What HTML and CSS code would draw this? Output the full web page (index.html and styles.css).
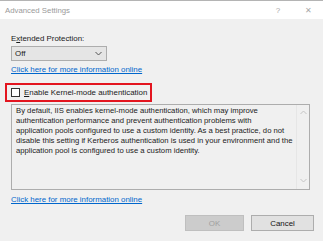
FILE: index.html
```html
<!DOCTYPE html>
<html lang="en">
<head>
    <meta charset="UTF-8">
    <title>Advanced Settings</title>
    <link rel="stylesheet" href="styles.css">
</head>
<body>
    <div class="titlebar">
        <span class="title">Advanced Settings</span>
        <span class="title-btn help">?</span>
        <span class="title-btn close">&#x2715;</span>
    </div>
    <div class="content">
        <div class="label">E<u>x</u>tended Protection:</div>
        <div class="select">
            <span>Off</span>
            <svg width="7" height="5" viewBox="0 0 7 5"><path d="M0.5 1 L3.5 4 L6.5 1" fill="none" stroke="#555" stroke-width="1"/></svg>
        </div>
        <a class="link" href="#">Click here for more information online</a>

        <div class="highlight">
            <span class="checkbox"></span>
            <span><u>E</u>nable Kernel-mode authentication</span>
        </div>

        <div class="description">
            <div class="desc-text">By default, IIS enables kernel-mode authentication, which may improve
authentication performance and prevent authentication problems with
application pools configured to use a custom identity. As a best practice, do not
disable this setting if Kerberos authentication is used in your environment and the
application pool is configured to use a custom identity.</div>
            <div class="scrollbar">
                <svg width="7" height="5" viewBox="0 0 7 5"><path d="M0.5 4 L3.5 1 L6.5 4" fill="none" stroke="#c4c4c4" stroke-width="1"/></svg>
                <svg width="7" height="5" viewBox="0 0 7 5"><path d="M0.5 1 L3.5 4 L6.5 1" fill="none" stroke="#c4c4c4" stroke-width="1"/></svg>
            </div>
        </div>
        <a class="link link-bottom" href="#">Click here for more information online</a>

        <div class="buttons">
            <button class="btn" disabled>OK</button>
            <button class="btn">Cancel</button>
        </div>
    </div>
</body>
</html>
```

FILE: styles.css
```css
body {
    margin: 0;
    padding: 0;
    width: 323px;
    height: 241px;
    background-color: #f0f0f0;
    font-family: "Liberation Sans", Arial, sans-serif;
    font-size: 7.9px;
    color: #1a1a1a;
    overflow: hidden;
}

.titlebar {
    display: flex;
    align-items: center;
    height: 18px;
    border-top: 1px solid #b4b4b4;
    background-color: #fff;
    padding-left: 5px;
}

.title {
    flex: 1;
    color: #9a9a9a;
    font-size: 7.8px;
}

.title-btn {
    color: #a8a8a8;
    font-size: 8px;
    text-align: center;
}

.help {
    width: 10px;
    margin-right: 20px;
}

.close {
    width: 10px;
    margin-right: 10px;
}

.content {
    display: flex;
    flex-direction: column;
    padding: 0 9px 0 11px;
}

.label {
    margin-top: 15px;
    line-height: 10px;
}

.select {
    display: flex;
    align-items: center;
    justify-content: space-between;
    width: 87px;
    height: 13px;
    margin-top: 2px;
    padding: 0 4px 0 3px;
    box-sizing: content-box;
    border: 1px solid #adadad;
    background-color: #e5e5e5;
}

.select span {
    line-height: 13px;
}

.link {
    align-self: flex-start;
    margin-top: 4px;
    line-height: 10px;
    color: #0066cc;
}

.highlight {
    display: flex;
    align-items: center;
    width: 139px;
    height: 15px;
    margin: 8px 0 0 -6px;
    padding-left: 4px;
    border: 2px solid #e3151f;
}

.checkbox {
    width: 7px;
    height: 7px;
    margin-right: 4px;
    border: 1px solid #333;
    background-color: #fff;
}

.description {
    display: flex;
    width: 297px;
    height: 84px;
    margin-top: 2px;
    border: 1px solid #adadad;
}

.desc-text {
    flex: 1;
    min-width: 0;
    padding: 1px 0 0 4px;
    font-size: 7.7px;
    line-height: 10px;
    white-space: pre;
    color: #222;
}

.scrollbar {
    display: flex;
    flex-direction: column;
    justify-content: space-between;
    align-items: center;
    width: 12px;
    padding: 5px 0 6px;
    border-left: 1px solid #e6e6e6;
}

.link-bottom {
    margin-top: 5px;
}

.buttons {
    display: flex;
    justify-content: flex-end;
    gap: 7px;
    margin-top: 10px;
}

.btn {
    width: 60px;
    height: 16px;
    padding: 0;
    font-family: inherit;
    font-size: 7.9px;
    color: #111;
    border: 1px solid #adadad;
    background-color: #e1e1e1;
}

.btn:disabled {
    width: 59px;
    color: #a0a0a0;
    border-color: #bfbfbf;
    background-color: #cccccc;
}

.btn:last-child {
    width: 63px;
}
```
